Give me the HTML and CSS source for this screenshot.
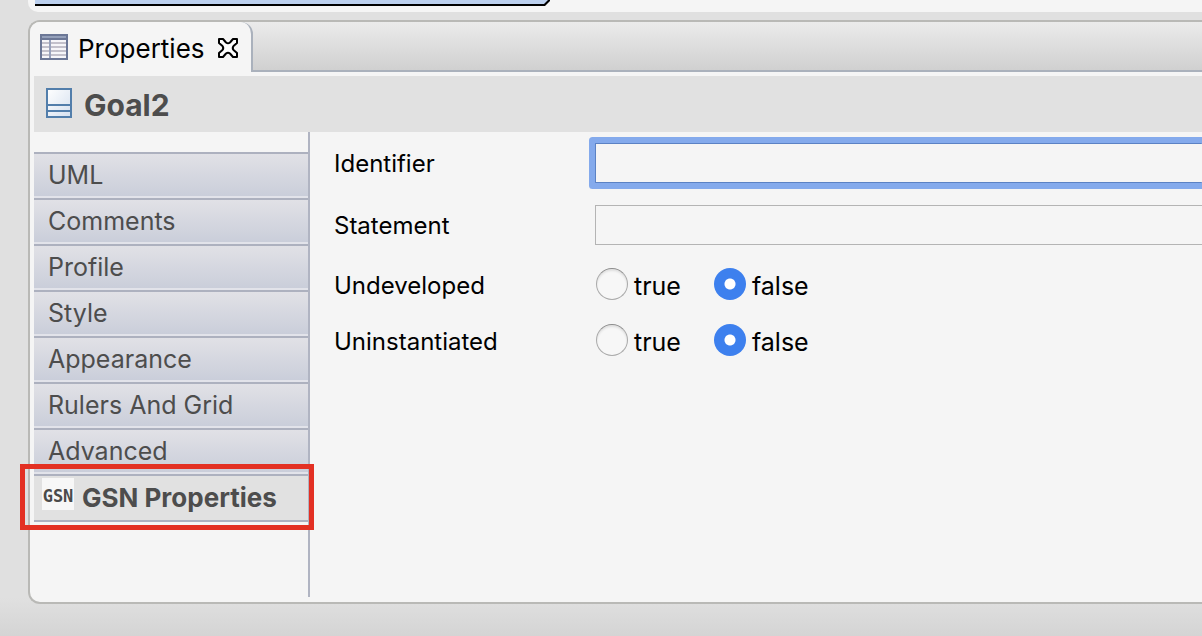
FILE: index.html
```html
<!DOCTYPE html>
<html lang="en">
<head>
<meta charset="utf-8">
<title>Properties</title>
<link rel="stylesheet" href="styles.css">
</head>
<body>
<div class="editor">
  <svg class="node-edge" width="516" height="6" viewBox="0 0 516 6" aria-hidden="true">
    <path d="M1 0H516V1L511 6H1Z" fill="#000"/>
    <path d="M1 0H514L510 4H1Z" fill="#bcd0ee"/>
  </svg>
</div>
<section class="view">
  <div class="view-tabs">
    <div class="view-tab">
      <svg width="28" height="26" viewBox="0 0 28 26" aria-hidden="true">
        <path d="M0 0H28V26H0Z" fill="#6b7796"/>
        <path d="M2 2H26V4H2Z" fill="#94a0ba"/>
        <path d="M2 6H26V24H2Z" fill="#f6f6f9"/>
        <path d="M2 9H26M2 13H26M2 17H26M2 21H26" stroke="#c3c1cb" stroke-width="2"/>
        <path d="M10 6V24" stroke="#98a2bc" stroke-width="2"/>
      </svg>
      <span class="view-name">Properties</span>
      <button class="close" type="button" aria-label="Close">
        <svg width="20" height="20" viewBox="0 0 20 20" aria-hidden="true">
          <path d="M1 1H5L8 4.500Q10 6 12 4.500L15 1H19V5L15.500 8Q14 10 15.500 12L19 15V19H15L12 15.500Q10 14 8 15.500L5 19H1V15L4.500 12Q6 10 4.500 8L1 5Z" fill="#fff" stroke="#000" stroke-width="2" stroke-linejoin="round"/>
        </svg>
      </button>
    </div>
    <div class="view-toolbar"></div>
  </div>
  <header class="title">
    <svg width="26" height="30" viewBox="0 0 26 30" aria-hidden="true">
      <defs><linearGradient id="sheet" x1="0" y1="0" x2="1" y2="1"><stop offset="0" stop-color="#fff"/><stop offset="1" stop-color="#d5e0ef"/></linearGradient></defs>
      <path d="M1 1H25V29H1Z" fill="url(#sheet)" stroke="#527eab" stroke-width="2"/>
      <path d="M2 17H24M2 23H24" stroke="#527eab" stroke-width="2"/>
    </svg>
    <h1>Goal2</h1>
  </header>
  <div class="content">
    <nav class="sections">
      <button type="button">UML</button>
      <button type="button">Comments</button>
      <button type="button">Profile</button>
      <button type="button">Style</button>
      <button type="button">Appearance</button>
      <button type="button">Rulers And Grid</button>
      <button type="button">Advanced</button>
      <button type="button" class="selected">
        <svg width="32" height="32" viewBox="0 0 32 32" aria-hidden="true">
          <path d="M0 0H32V32H0Z" fill="#f7f7f7"/>
          <text class="badge" x="16" y="24" text-anchor="middle">GSN</text>
        </svg>
        <span>GSN Properties</span>
      </button>
    </nav>
    <form class="fields">
      <label for="identifier">Identifier</label>
      <input class="text focused" id="identifier" type="text">
      <label for="statement">Statement</label>
      <input class="text" id="statement" type="text">
      <span class="group-name" id="undeveloped">Undeveloped</span>
      <div class="choices" role="radiogroup" aria-labelledby="undeveloped">
        <label><input type="radio" name="undeveloped"><span>true</span></label>
        <label><input type="radio" name="undeveloped" checked><span>false</span></label>
      </div>
      <span class="group-name" id="uninstantiated">Uninstantiated</span>
      <div class="choices" role="radiogroup" aria-labelledby="uninstantiated">
        <label><input type="radio" name="uninstantiated"><span>true</span></label>
        <label><input type="radio" name="uninstantiated" checked><span>false</span></label>
      </div>
    </form>
  </div>
</section>
</body>
</html>
```
FILE: styles.css
```css
*, *::after { box-sizing: border-box; }
html { height: 100%; }
body {
  margin: 0;
  min-height: 100%;
  display: flex;
  flex-direction: column;
  gap: 8px;
  padding: 0 0 32px 28px;
  overflow: hidden;
  background: linear-gradient(#e0e0e0, #e0e0e0 94%, #d4d4d4);
  font-family: Inter, "Liberation Sans", sans-serif;
  font-size: 24px;
  color: #000;
}
button { font: inherit; border: 0; padding: 0; background: none; }
svg { display: block; flex: none; }

.editor {
  height: 12px;
  padding-left: 6px;
  background: #f5f5f5;
  border-bottom-left-radius: 10px;
}

.view {
  flex: 1;
  display: flex;
  flex-direction: column;
  background: #f5f5f5;
  border: 2px solid #b9b9b6;
  border-right: 0;
  border-radius: 12px 0 0 12px;
}
.view-tabs {
  display: flex;
  height: 50px;
  border-top-left-radius: 10px;
  background: linear-gradient(#ebebeb, #cfcfcf);
}
.view-tab {
  display: flex;
  align-items: center;
  gap: 10px;
  padding: 0 13px 0 10px;
  border-right: 2px solid #aab1bc;
  border-radius: 10px 12px 0 0;
  background: #f5f5f5;
  font-size: 26px;
}
.view-name { padding-top: 2px; }
.close { margin: 2px 0 0 3px; }
.view-toolbar {
  flex: 1;
  border-bottom: 2px solid #aab1bc;
}
.title {
  display: flex;
  align-items: center;
  gap: 12px;
  height: 56px;
  margin: 4px 0 0 4px;
  padding: 0 0 2px 12px;
  background: #e1e1e1;
  color: #4d4d4d;
}
.title h1 { margin: 0; padding-top: 4px; font-size: 30px; font-weight: 700; }

.content { flex: 1; display: flex; padding: 0 0 5px 4px; }
.sections {
  position: relative;
  width: 276px;
  padding-top: 20px;
  border-right: 2px solid #b0b4c2;
}
.sections button {
  display: flex;
  align-items: center;
  width: 100%;
  height: 46px;
  padding-left: 14px;
  border-top: 2px solid #adb1bf;
  border-bottom: 2px solid #e2e3ea;
  background: linear-gradient(#e1e1e6, #caceda);
  color: #4d4d4d;
  font-size: 25px;
}
.sections .selected {
  gap: 8px;
  height: 48px;
  padding: 0 0 2px 8px;
  border-bottom-color: #adb1bf;
  background: #e1e1e1;
  font-size: 26px;
  font-weight: 700;
}
.selected svg { align-self: flex-start; margin-top: 2px; }
.badge {
  font-family: "DejaVu Sans Mono", "Liberation Mono", monospace;
  font-size: 17px;
  font-weight: 700;
  fill: #4a4a4a;
}
/* highlight frame around the selected section */
.sections::after {
  content: "";
  position: absolute;
  left: -14px;
  right: -6px;
  top: 332px;
  height: 66px;
  border: 5px solid #e33023;
}

.fields {
  flex: 1;
  display: grid;
  grid-template-columns: 239px 1fr;
  grid-auto-rows: min-content;
  gap: 22px;
  align-items: center;
  padding: 11px 0 0 24px;
}
.text {
  width: 100%;
  height: 40px;
  padding: 0 8px;
  border: 1px solid #b4b4b4;
  border-right: 0;
  outline: 0;
  background: #f5f5f5;
  font: inherit;
}
.focused {
  border-color: #5b82c4;
  box-shadow: 0 0 0 6px #84aaec;
  border-radius: 1px;
}
.group-name { padding-top: 2px; }
.choices { display: flex; gap: 32px; height: 34px; }
.choices label { display: flex; align-items: center; gap: 6px; font-size: 25px; }
.choices span { padding-top: 4px; }
.choices input {
  appearance: none;
  width: 32px;
  height: 32px;
  margin: 0 0 0 1px;
  border: 1px solid #ababab;
  border-top-color: #8c8c8c;
  border-radius: 50%;
  background: #f7f7f7;
  box-shadow: inset 0 2px 2px #e0e0e0;
}
.choices input:checked {
  border: 0;
  background: radial-gradient(circle, #fff 5px, #3d80ee 6px);
  box-shadow: none;
}
```
